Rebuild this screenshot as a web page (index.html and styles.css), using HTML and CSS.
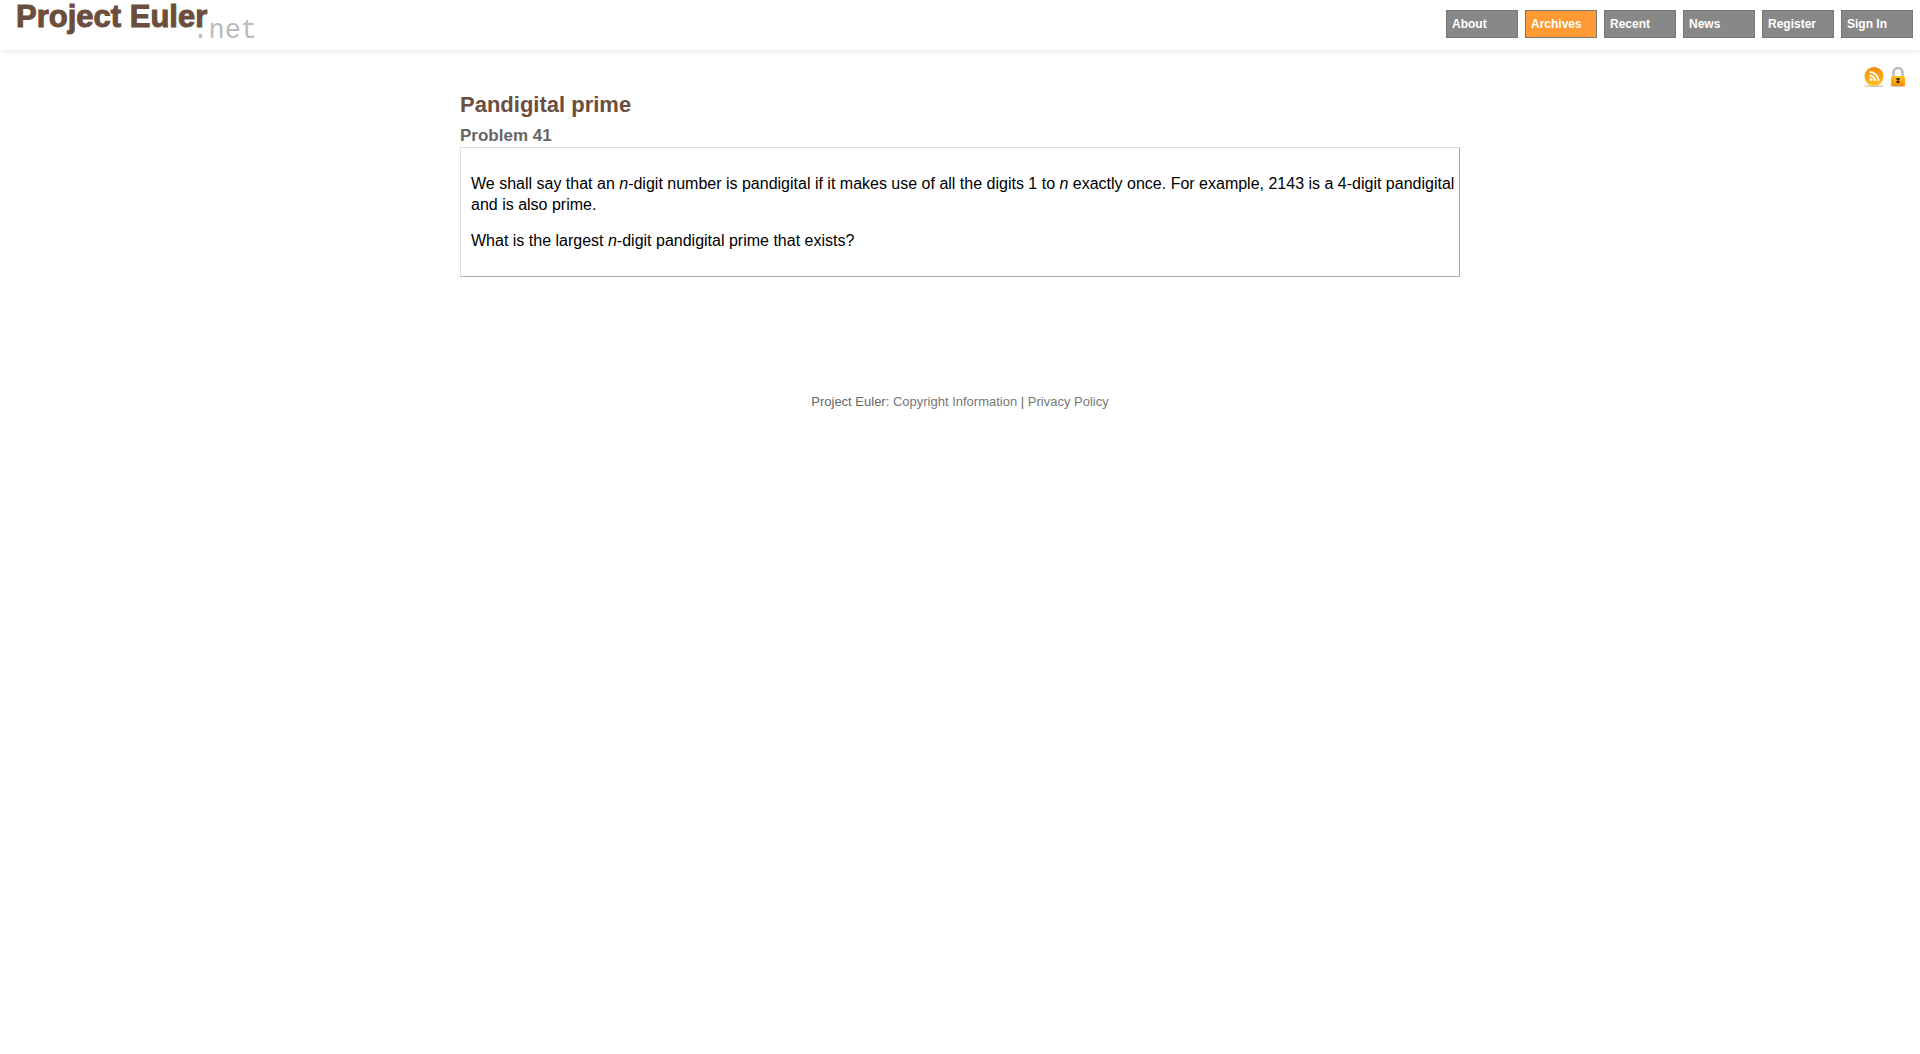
FILE: index.html
```html
<!DOCTYPE html>
<html lang="en">
<head>
<meta charset="utf-8">
<title>#41 Pandigital prime - Project Euler</title>
<link rel="stylesheet" href="styles.css">
</head>
<body>
<header class="header">
  <a class="logo" href="#"><span class="logo-name">Project Euler</span><span class="logo-net">.net</span></a>
  <nav class="nav">
    <a href="#">About</a>
    <a class="current" href="#">Archives</a>
    <a href="#">Recent</a>
    <a href="#">News</a>
    <a href="#">Register</a>
    <a href="#">Sign In</a>
  </nav>
</header>
<div class="info">
  <a href="#" aria-label="RSS feed">
    <svg width="20" height="20" viewBox="0 0 20 20">
      <defs><linearGradient id="orange" x1="0" y1="0" x2="0" y2="1"><stop offset="0" stop-color="#f58a0b"/><stop offset="1" stop-color="#ffc21c"/></linearGradient></defs>
      <ellipse cx="10" cy="19" rx="10" ry="1" fill="#ccc"/>
      <circle cx="10" cy="9.5" r="9.5" fill="url(#orange)"/>
      <circle cx="7" cy="12.500" r="1.5" fill="#fff"/>
      <path d="M5.500 8.500a5.500 5.500 0 0 1 5.500 5.500M5.500 5a9 9 0 0 1 9 9" fill="none" stroke="#fff" stroke-width="2"/>
    </svg>
  </a>
  <a href="#" aria-label="Secure connection">
    <svg width="20" height="20" viewBox="0 0 20 20">
      <defs><linearGradient id="gold" x1="0" y1="0" x2="0" y2="1"><stop offset="0" stop-color="#ffc31e"/><stop offset="1" stop-color="#f38b0c"/></linearGradient></defs>
      <ellipse cx="10" cy="19" rx="8" ry="1" fill="#ccc"/>
      <path d="M5.500 10V5.500a4.500 4.500 0 0 1 9 0V10" fill="none" stroke="#b9b9b9" stroke-width="2.500"/>
      <rect x="3" y="9" width="14" height="10" rx="1.500" fill="url(#gold)"/>
      <path d="M8.500 11h3v2h-1v1h1v2h-3v-2h1v-1h-1z" fill="#3c2604"/>
    </svg>
  </a>
</div>
<main class="content">
  <h2>Pandigital prime</h2>
  <h3>Problem 41</h3>
  <div class="problem">
    <p>We shall say that an <i>n</i>-digit number is pandigital if it makes use of all the digits 1 to <i>n</i> exactly once. For example, 2143 is a 4-digit pandigital and is also prime.</p>
    <p>What is the largest <i>n</i>-digit pandigital prime that exists?</p>
  </div>
</main>
<footer class="footer">Project Euler: <a href="#">Copyright Information</a> | <a href="#">Privacy Policy</a></footer>
</body>
</html>
```
FILE: styles.css
```css
body {
  margin: 0;
  background: #fff;
  color: #000;
  font: 16px/21px "Liberation Sans", Arial, sans-serif;
}
a { text-decoration: none; color: inherit; }

.header {
  display: flex;
  justify-content: space-between;
  align-items: flex-start;
  height: 50px;
  box-sizing: border-box;
  padding: 0 7px 0 16px;
  box-shadow: 0 1px 5px #e4e4e4;
}
.logo { display: flex; align-items: flex-start; }
.logo-name {
  color: #6b4e3d;
  font: 900 31px/34px "Liberation Sans", Arial, sans-serif;
  -webkit-text-stroke: 1px #6b4e3d;
}
.logo-net {
  margin: 15px 0 0 -15px;
  color: #bbb;
  font: 27px/32px "Liberation Mono", "Courier New", monospace;
}
.nav { display: flex; gap: 7px; padding-top: 10px; }
.nav a {
  box-sizing: border-box;
  width: 72px;
  height: 28px;
  padding-left: 5px;
  border: 1px solid #777;
  background: #888;
  color: #fff;
  font-size: 12px;
  font-weight: bold;
  line-height: 26px;
}
.nav .current { background: #f93; }

.info {
  display: flex;
  justify-content: flex-end;
  gap: 4px;
  padding: 17px 12px 0 0;
}
.info a, .info svg { display: block; }

.content { max-width: 1000px; margin: 0 auto; }
h2 { margin: 4px 0 0; color: #6b4e3d; font-size: 22px; line-height: 28px; }
h3 { margin: 6px 0 0; color: #666; font-size: 17px; line-height: 22px; }
.problem {
  padding: 10px 1px 10px 10px;
  border: 1px solid;
  border-color: #ddd #aaa #aaa #ddd;
}
.problem p { margin: 15px 0; }

.footer {
  margin-top: 116px;
  color: #666;
  font-size: 13px;
  line-height: 18px;
  text-align: center;
}
.footer a { color: #777; }
```
